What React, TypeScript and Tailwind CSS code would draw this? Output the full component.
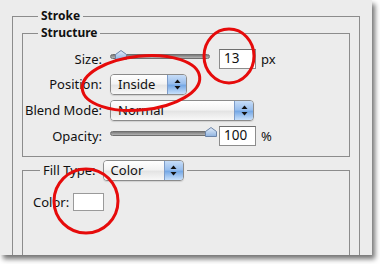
import React from "react";

function Arrows() {
  return (
    <svg width="7" height="11" viewBox="0 0 7 11">
      <path d="M3.5 0.5 L6.5 4 L0.5 4 Z" fill="#111" />
      <path d="M3.5 10.5 L6.5 7 L0.5 7 Z" fill="#111" />
    </svg>
  );
}

function Select({ label, w }: { label: string; w: string }) {
  return (
    <div
      className={`flex h-[21px] ${w} rounded-[4px] border border-[#8b8b8b] overflow-hidden shadow-[0_1px_1px_rgba(0,0,0,0.12)]`}
    >
      <div className="flex-1 flex items-center pl-[7px] bg-[linear-gradient(#ffffff,#f3f3f3_45%,#e4e4e4_55%,#f8f8f8)] text-[13px] text-[#111] leading-none">
        {label}
      </div>
      <div className="w-[19px] flex items-center justify-center border-l border-[#7d9cc9] bg-[linear-gradient(#c7ddf7,#99bfee_45%,#76a9e6_55%,#c8e0fb)]">
        <Arrows />
      </div>
    </div>
  );
}

function Slider({ thumb }: { thumb: number }) {
  return (
    <div className="relative w-[100px] h-[20px]">
      <div className="absolute left-0 right-0 top-[5px] h-[5px] rounded-full border border-[#6f6f6f] bg-[linear-gradient(#7c7c7c,#b4b4b4)]" />
      <svg
        className="absolute top-[1px]"
        style={{ left: thumb - 6 }}
        width="12"
        height="10"
        viewBox="0 0 12 10"
      >
        <defs>
          <linearGradient id={`tg${thumb}`} x1="0" y1="0" x2="0" y2="1">
            <stop offset="0" stopColor="#e4eefb" />
            <stop offset="1" stopColor="#8fb3e0" />
          </linearGradient>
        </defs>
        <path
          d="M6 0.5 L11.5 4.5 L11.5 9.5 L0.5 9.5 L0.5 4.5 Z"
          fill={`url(#tg${thumb})`}
          stroke="#6b84a8"
          strokeWidth="1"
        />
      </svg>
    </div>
  );
}

function NumInput({ value }: { value: string }) {
  return (
    <div className="w-[37px] h-[20px] bg-white border border-[#8c8c8c] border-t-[#6e6e6e] flex items-center pl-[4px] text-[13.5px] text-[#111] leading-none">
      {value}
    </div>
  );
}

function Label({ children }: { children: React.ReactNode }) {
  return (
    <div className="w-[79px] text-right text-[13px] text-[#111] leading-none whitespace-nowrap">
      {children}
    </div>
  );
}

export default function App() {
  return (
    <div className="w-[380px] h-[264px] bg-white font-['Noto_Sans','DejaVu_Sans',sans-serif]">
      <div className="relative w-[372px] h-[255px] bg-[#ececec] overflow-hidden shadow-[3px_4px_5px_rgba(0,0,0,0.55)] flex flex-col">
        <fieldset className="flex-1 ml-[12px] mr-[12px] mt-[8px] border border-b-0 border-[#8c8c8c] px-[9px] min-w-0">
          <legend className="ml-[16px] px-[3px] text-[12px] font-bold leading-[16px] text-[#111]">
            Stroke
          </legend>
          <fieldset className="mt-[1px] border border-[#8c8c8c] pt-[8px] pb-[10px] min-w-0">
            <legend className="ml-[15px] px-[3px] text-[12px] font-bold leading-[16px] text-[#111]">
              Structure
            </legend>
            <div className="flex flex-col gap-[5px]">
              <div className="flex items-center h-[20px]">
                <Label>Size:</Label>
                <div className="ml-[8px]">
                  <Slider thumb={11} />
                </div>
                <div className="ml-[9px]">
                  <NumInput value="13" />
                </div>
                <span className="ml-[5px] text-[13px] text-[#111] leading-none">px</span>
              </div>
              <div className="flex items-center h-[21px]">
                <Label>Position:</Label>
                <div className="ml-[8px]">
                  <Select label="Inside" w="w-[77px]" />
                </div>
              </div>
              <div className="flex items-center h-[21px]">
                <Label>Blend Mode:</Label>
                <div className="ml-[8px]">
                  <Select label="Normal" w="w-[144px]" />
                </div>
              </div>
              <div className="flex items-center h-[20px]">
                <Label>Opacity:</Label>
                <div className="ml-[8px]">
                  <Slider thumb={101} />
                </div>
                <div className="ml-[9px]">
                  <NumInput value="100" />
                </div>
                <span className="ml-[5px] text-[13px] text-[#111] leading-none">%</span>
              </div>
            </div>
          </fieldset>
          <fieldset className="mt-[3px] h-[120px] border border-b-0 border-[#8c8c8c] pl-[10px] pt-[12px] min-w-0">
            <legend className="ml-[7px] px-[3px] flex items-center gap-[7px]">
              <span className="text-[13px] text-[#111] leading-none">Fill Type:</span>
              <Select label="Color" w="w-[81px]" />
            </legend>
            <div className="flex items-center gap-[4px]">
              <span className="text-[13px] text-[#111] leading-none">Color:</span>
              <div className="w-[31px] h-[18px] bg-white border border-[#9a9a9a]" />
            </div>
          </fieldset>
        </fieldset>
        <svg
          className="absolute left-0 top-0 pointer-events-none"
          width="372"
          height="255"
          viewBox="0 0 372 255"
        >
          <ellipse
            cx="141"
            cy="83"
            rx="59"
            ry="27"
            transform="rotate(-6 141 83)"
            fill="none"
            stroke="#e60b0b"
            strokeWidth="3"
          />
          <ellipse cx="229" cy="56" rx="25" ry="27" fill="none" stroke="#e60b0b" strokeWidth="3" />
          <ellipse cx="86" cy="201" rx="32" ry="32" fill="none" stroke="#e60b0b" strokeWidth="3" />
        </svg>
      </div>
    </div>
  );
}
